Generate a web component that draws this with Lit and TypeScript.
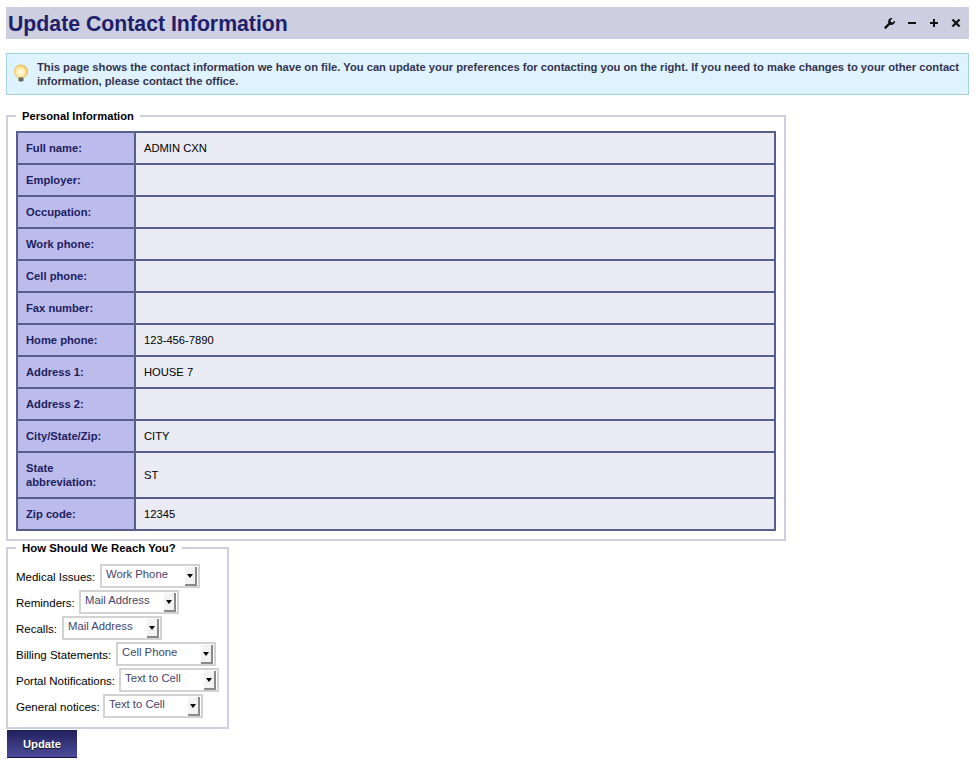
import { LitElement, html, css, svg } from "lit";
import { customElement } from "lit/decorators.js";

const PERSONAL: [string, string][] = [
  ["Full name:", "ADMIN CXN"],
  ["Employer:", ""],
  ["Occupation:", ""],
  ["Work phone:", ""],
  ["Cell phone:", ""],
  ["Fax number:", ""],
  ["Home phone:", "123-456-7890"],
  ["Address 1:", "HOUSE 7"],
  ["Address 2:", ""],
  ["City/State/Zip:", "CITY"],
  ["State abbreviation:", "ST"],
  ["Zip code:", "12345"],
];

const REACH: [string, string, number][] = [
  ["Medical Issues:", "Work Phone", 84],
  ["Reminders:", "Mail Address", 63],
  ["Recalls:", "Mail Address", 46],
  ["Billing Statements:", "Cell Phone", 100],
  ["Portal Notifications:", "Text to Cell", 103],
  ["General notices:", "Text to Cell", 87],
];

const wrench = svg`<path d="M1 11.6 L2.6 13.2 L7 8.8 C9 9.4 11.2 8.6 11.8 6.5 C12 5.7 12 5 11.8 4.4 L9.7 6.5 L8 6 L7.5 4.3 L9.6 2.2 C8.9 2 8.1 2 7.3 2.3 C5.5 3 4.8 4.9 5.3 7 Z" fill="#111"/>`;

@customElement("app-root")
export class AppRoot extends LitElement {
  static styles = css`
    :host { display: block; font-family: "Liberation Sans", Arial, sans-serif; font-size: 11.2px; color: #000; background: #fff; }
    .page { padding: 7px 7px 0 6px; height: 759px; box-sizing: border-box; }
    .titlebar { display: flex; align-items: center; justify-content: space-between; height: 32px; background: #cdcedf; padding: 0 6px 0 2px; }
    h1 { margin: 0; font-size: 21.25px; font-weight: bold; color: #20206a; line-height: 34px; height: 32px; }
    .tools { display: flex; align-items: center; gap: 8px; }
    .tools svg { display: block; width: 14px; height: 14px; }
    .alert { display: flex; align-items: center; gap: 7px; height: 42px; box-sizing: border-box; margin-top: 14px; background: #dff3ff; border: 1px solid #a3d0e4; padding: 0 8px 0 6px; color: #33334f; font-weight: bold; line-height: 14px; }
    .alert svg { flex: none; width: 17px; height: 20px; }
    .alert p { margin: 0; }
    .group { margin: 0; padding: 0; border: 2px solid #cdcedf; }
    legend { margin-left: 0; padding: 2px 6px 0; font-weight: bold; line-height: 13px; color: #000; }
    .personal { margin-top: 13px; width: 780px; box-sizing: border-box; padding: 8px; }
    table { border-collapse: collapse; width: 760px; table-layout: fixed; }
    th, td { border: 2px solid #555f8a; padding: 8px; text-align: left; line-height: 14px; }
    th { width: 100px; background: #bcbcec; color: #20205e; font-weight: bold; }
    td { background: #ebebf5; }
    .reach { display: flex; flex-direction: column; align-items: flex-start; gap: 2px; margin-top: -1px; padding: 9px 8px 9px; box-sizing: border-box; width: 223px; }
    .reach legend { font-size: 11.4px; }
    .row { display: flex; align-items: flex-start; height: 24px; white-space: nowrap; }
    .row label { padding-top: 6px; line-height: 14px; font-size: 11.5px; }
    .select { display: flex; justify-content: space-between; box-sizing: border-box; width: 100px; height: 24px; border: 2px solid #d2d2d2; background: #fff; padding: 0 0 0 4px; color: #44446a; line-height: 17px; font-size: 11.3px; }
    .arrow { display: flex; justify-content: center; box-sizing: border-box; width: 12px; height: 19px; margin: 1px 1px 0 0; padding: 7px 2px 0 0; background: #f3f3f3; box-shadow: inset -2px -2px 0 #8a8a8a; }
    .arrow i { display: block; width: 0; height: 0; border: 3.5px solid transparent; border-top: 4px solid #000; border-bottom: 0; }
    .btn { display: block; width: 70px; height: 28px; margin: 1px 0 0 1px; padding: 0; border: 0; border-bottom: 1px solid #15154e; background: linear-gradient(#20205c, #4c4c9a); color: #fff; font: bold 11.2px "Liberation Sans", Arial, sans-serif; text-shadow: 0 1px 1px #111; }
  `;

  render() {
    return html`
      <div class="page">
        <div class="titlebar">
          <h1>Update Contact Information</h1>
          <div class="tools">
            <svg viewBox="0 0 14 14">${wrench}</svg>
            <svg viewBox="0 0 14 14"><rect x="3" y="6" width="8" height="2" fill="#111"/></svg>
            <svg viewBox="0 0 14 14"><path d="M6 3h2v3h3v2H8v3H6V8H3V6h3z" fill="#111"/></svg>
            <svg viewBox="0 0 14 14"><path d="M3.5 3.5l7 7M10.5 3.5l-7 7" stroke="#111" stroke-width="2.2" fill="none"/></svg>
          </div>
        </div>
        <div class="alert">
          <svg viewBox="0 0 17 20">
            <defs>
              <radialGradient id="bulb" cx="0.45" cy="0.55" r="0.6">
                <stop offset="0" stop-color="#fffdf0"/>
                <stop offset="0.6" stop-color="#ffe9a0"/>
                <stop offset="1" stop-color="#f0b040"/>
              </radialGradient>
            </defs>
            <circle cx="8" cy="7.5" r="6.6" fill="url(#bulb)" stroke="#efb860" stroke-width="0.8"/>
            <path d="M5.5 13.5h5v3l-1 1h-3l-1-1z" fill="#6a6a62"/>
          </svg>
          <p>This page shows the contact information we have on file. You can update your preferences for contacting you on the right. If you need to make changes to your other contact information, please contact the office.</p>
        </div>
        <fieldset class="group personal">
          <legend>Personal Information</legend>
          <table>
            ${PERSONAL.map(([k, v]) => html`<tr><th>${k}</th><td>${v}</td></tr>`)}
          </table>
        </fieldset>
        <fieldset class="group reach">
          <legend>How Should We Reach You?</legend>
          ${REACH.map(([k, v, w]) => html`
            <div class="row">
              <label style="width:${w}px">${k}</label>
              <span class="select">
                <span class="val">${v}</span>
                <span class="arrow"><i></i></span>
              </span>
            </div>`)}
        </fieldset>
        <button class="btn">Update</button>
      </div>
    `;
  }
}
